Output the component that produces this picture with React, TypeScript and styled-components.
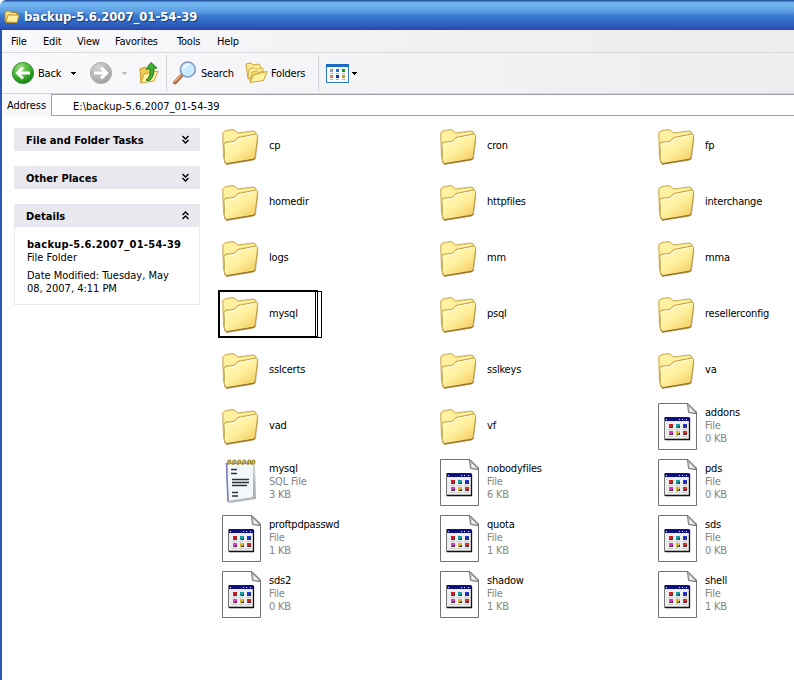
import React from "react";
import styled, { createGlobalStyle } from "styled-components";

const GlobalStyle = createGlobalStyle`
  *, *::after { box-sizing: border-box; }
  body { margin: 0; background: #fff; }
  svg { display: block; flex: none; }
`;

const Window = styled.div`
  width: 794px;
  height: 680px;
  overflow: hidden;
  display: flex;
  flex-direction: column;
  background: #fff;
  color: #000;
  font: 11px/13px "DejaVu Sans Condensed", "DejaVu Sans", sans-serif;
  font-stretch: condensed;
  letter-spacing: -0.2px;
  white-space: nowrap;
`;

const TitleBar = styled.header`
  height: 30px;
  flex: none;
  display: flex;
  align-items: center;
  padding: 4px 0 0 4px;
  gap: 4px;
  border-radius: 6px 0 0 0;
  background: linear-gradient(#2550a0 0, #2c58a8 1px, #6fb0ee 2px, #73b5f0 5px, #5a9ae2 12px, #3f80d4 15px, #3474cc 18px, #2f62c0 24px, #2a4db0 29px, #2743a4 30px);
`;

const WindowTitle = styled.h1`
  margin: 0;
  color: #fff;
  font-size: 13px;
  line-height: 18px;
  font-weight: bold;
  letter-spacing: -0.05px;
  text-shadow: 1px 1px 1px #163878;
`;

const Frame = styled.div`
  flex: 1;
  min-height: 0;
  display: flex;
  flex-direction: column;
  border-left: 2px solid #2d55b4;
`;

const MenuBar = styled.nav`
  height: 23px;
  flex: none;
  display: flex;
  align-items: center;
  padding-left: 9px;
  background: linear-gradient(90deg, #fafafc, #f1f1f3 55%, #ededf0);
  border-bottom: 1px solid #d8d8dc;
`;

const MenuItem = styled.span<{ $w: number }>`
  width: ${(p) => p.$w}px;
`;

const ToolBar = styled.div`
  height: 41px;
  flex: none;
  display: flex;
  align-items: center;
  padding-left: 9px;
  background: linear-gradient(90deg, #fafafc, #f3f3f5 50%, #ededf0);
  border-bottom: 1px solid #d4d4d8;
`;

const ToolLabel = styled.span<{ $w: number }>`
  width: ${(p) => p.$w}px;
  padding-left: 3px;
`;

const Gap = styled.span<{ $w: number }>`
  width: ${(p) => p.$w}px;
  flex: none;
`;

const Separator = styled.span`
  width: 1px;
  height: 36px;
  background: #cfcfd4;
`;

const AddressBar = styled.div`
  height: 22px;
  flex: none;
  display: flex;
  align-items: center;
  background: #f8f8fa;
`;

const AddressCaption = styled.span`
  width: 49px;
  padding-left: 5px;
  letter-spacing: -0.05px;
`;

const AddressField = styled.div`
  flex: 1;
  height: 22px;
  padding: 5px 0 0 21px;
  background: #fff;
  border: solid #a0a0a6;
  border-width: 1px 0 1px 1px;
  letter-spacing: 0.02px;
`;

const Body = styled.div`
  flex: 1;
  display: flex;
  min-height: 0;
`;

const TaskPane = styled.aside`
  width: 198px;
  margin-right: 18px;
  padding: 12px 0 0 12px;
  flex: none;
`;

const Panel = styled.section`
  margin-bottom: 15px;
`;

const PanelHeader = styled.h2`
  margin: 0;
  height: 23px;
  padding: 2px 10px 0 12px;
  display: flex;
  align-items: center;
  justify-content: space-between;
  background: #e8e8ee;
  font-size: 11px;
  letter-spacing: 0.03px;
`;

const PanelBody = styled.div`
  height: 78px;
  padding: 11px 12px 0;
  border: 1px solid #e9e9ee;
  border-top: 0;
`;

const DetailName = styled.div`
  font-weight: bold;
  letter-spacing: 0.27px;
`;

const DetailText = styled.p`
  margin: 0 0 5px;
  letter-spacing: -0.02px;
`;

const FileGrid = styled.main`
  display: grid;
  grid-template-columns: repeat(3, 218px);
  grid-auto-rows: 56px;
  align-content: start;
  padding-top: 2px;
`;

const Tile = styled.div`
  position: relative;
  display: flex;
  align-items: center;
  padding-left: 4px;
`;

const IconCell = styled.div<{ $drop: number }>`
  width: 47px;
  flex: none;
  padding-top: ${(p) => p.$drop}px;
`;

const TileText = styled.div<{ $file: boolean }>`
  padding-bottom: ${(p) => (p.$file ? 1 : 2)}px;
`;

const Meta = styled.div`
  color: #858585;
`;

const Highlight = styled.div`
  position: absolute;
  left: 0;
  top: 4px;
  width: 100px;
  height: 48px;
  border: 2px solid #000;
  border-right-width: 1px;
  &::after {
    content: "";
    position: absolute;
    left: 95px;
    top: -1px;
    width: 7px;
    height: 47px;
    border: 1px solid #000;
  }
`;

const FolderIcon = () => (
  <svg width="38" height="40" viewBox="0 0 38 40">
    <defs>
      <linearGradient id="front" x1="0" y1="0" x2=".8" y2="1">
        <stop offset="0" stopColor="#fffbc0" />
        <stop offset=".55" stopColor="#fff09e" />
        <stop offset="1" stopColor="#f2cb5c" />
      </linearGradient>
    </defs>
    <path d="M4 38 L31 33.8 L34 32 L36.5 12 L35 9 L3 35Z" fill="#8f8770" opacity=".45" />
    <path d="M.7 6 L2.5 4 L10 2.5 L13 3.3 L15.5 6 L31 4 L33.5 5 L34.5 8 L32 32 L3 36 L1.5 30Z" fill="#fbe38a" stroke="#c8aa52" />
    <path d="M2 7 L3.5 5 L10 3.7 L12.5 4.6 L15 7.4 L31 5.3 L32 6.5 L15 9.5 L11.5 13.2 L2.5 14Z" fill="#fff1a0" />
    <path d="M2 17 L3.3 15.5 L12 14.5 L16 10.5 L34.5 7 L35.8 8.2 L33 31 L31.5 32.5 L5 37 L3.3 36Z" fill="url(#front)" stroke="#c09a3c" />
    <path d="M3.8 34 L3.1 17.5 L4.2 16.5 L12.6 15.5 L16.5 11.6 L34.3 8.2" fill="none" stroke="#fffde4" />
    <path d="M4 36.8 L31.5 32.5 L33 31" fill="none" stroke="#967425" strokeWidth="1.3" />
  </svg>
);

const DocIcon = () => (
  <svg width="40" height="48" viewBox="0 0 40 48">
    <path d="M.5.5 H30 L38.5 9 V46.5 H.5Z" fill="#fff" stroke="#707070" />
    <path d="M29.5 1 L30.5 9.5 L38 10.5 V9Z" fill="#c8c8c8" stroke="#777" />
    <path d="M31.5 4.5 L32 8.5 L36 9Z" fill="#f8f8f8" />
    <path d="M6.5 14.5 H31.5 V36.5 H6.5Z" fill="#ededed" stroke="#777" />
    <path d="M7 36.5 H31.5 V15" fill="none" stroke="#111" strokeWidth="1.3" />
    <path d="M7 14 H31 V18 H7Z" fill="#10107c" />
    <path d="M21 16h1v1h-1zM24 16h1v1h-1zM28 16h1v1h-1zM8 16h1v1H8z" fill="#e9e9f8" />
    {["#d91a20", "#159ca4", "#2033d0", "#df33c5", "#d4b52c", "#dc2520"].map((c, i) => {
      const x = 11 + (i % 3) * 7;
      const y = 21 + Math.floor(i / 3) * 7;
      return (
        <g key={i}>
          <path d={`M${x} ${y}h4v4h-4z`} fill={c} />
          <path d={`M${x + 1} ${y + 3.5}h2.5v-1.5`} stroke="#333" fill="none" />
          <path d={`M${x - 1} ${y + 5.5}h5`} stroke="#ccc" />
        </g>
      );
    })}
  </svg>
);

const NotepadIcon = () => (
  <svg width="38" height="48" viewBox="0 0 38 48">
    <path d="M6 43 L31 39 L33 8 L34 40 L8 44Z" fill="#b5b5b5" />
    <path d="M4.5 4 L32 4 L31.5 38.5 L6 42.5Z" fill="#f4f8fb" stroke="#a4aab2" />
    <path d="M4.5 4 L6 42.5" stroke="#7b7dc4" strokeWidth="1.6" />
    <path d="M5 4.5 H32" stroke="#9a9684" strokeWidth="1.4" />
    {[6, 11, 16, 21, 26, 30].map((x) => (
      <path key={x} d={`M${x} 6 V3 q0-2 2-1.5 q1.2 .8 .4 3`} fill="none" stroke="#a58e2c" strokeWidth="1.6" />
    ))}
    <path d="M9 10.5h6M9 14.5h6M10 20.5h17M10 23.5h17M10 26.5h15M10 33.5h6M10 37h6" stroke="#2a313b" strokeWidth="1.5" />
  </svg>
);

const RoundArrow = ({ forward = false }: { forward?: boolean }) => {
  const id = forward ? "fwd" : "bck";
  return (
    <svg width="24" height="24" viewBox="0 0 24 24">
      <defs>
        <radialGradient id={id} cx=".38" cy=".25" r=".75">
          <stop offset="0" stopColor={forward ? "#d2d2d2" : "#9bdd7d"} />
          <stop offset=".6" stopColor={forward ? "#b8b8b8" : "#43ae2f"} />
          <stop offset="1" stopColor={forward ? "#a0a0a0" : "#168016"} />
        </radialGradient>
      </defs>
      <circle cx="12" cy="12" r="10.6" fill={`url(#${id})`} stroke={forward ? "#b0b0b0" : "#379735"} />
      <path
        d={forward ? "M5 12 H17 M12 6.5 L17.5 12 L12 17.5" : "M19 12 H7 M12 6.5 L6.5 12 L12 17.5"}
        fill="none"
        stroke="#fff"
        strokeWidth="3"
      />
    </svg>
  );
};

const Caret = ({ color = "#000" }: { color?: string }) => (
  <svg width="5" height="3" viewBox="0 0 5 3" shapeRendering="crispEdges">
    <path d="M0 0h5v1H4v1H3v1H2V2H1V1H0z" fill={color} />
  </svg>
);

const UpIcon = () => (
  <svg width="20" height="24" viewBox="0 0 20 24">
    <path d="M1 8 L6 6 L8 8 L15 7 L15 18 L2 22Z" fill="#efca55" stroke="#c49a2b" />
    <path d="M2 22 L5 13 L19 10 L15 20Z" fill="#fff1a0" stroke="#cda637" />
    <path d="M7 19 Q12 16 11 8 L7 8 L12 1.5 L18 7 L14.5 7.5 Q16 15 10 20Z" fill="#43ad34" stroke="#247c20" />
  </svg>
);

const SearchIcon = () => (
  <svg width="26" height="26" viewBox="0 0 26 26">
    <path d="M10 15 L3 22.5" stroke="#a96c45" strokeWidth="4" strokeLinecap="round" />
    <path d="M9 15 L2.7 21.7" stroke="#e5b087" strokeWidth="1.5" strokeLinecap="round" />
    <circle cx="15.8" cy="9.5" r="7.5" fill="#c9ebfb" stroke="#8099c6" strokeWidth="1.6" />
    <path d="M10.5 9 Q12 3 18 4.5 Q14 6 10.5 9Z" fill="#fff" />
  </svg>
);

const FoldersIcon = () => (
  <svg width="23" height="22" viewBox="0 0 23 22">
    <path d="M1 2 L6 1 L8 3 L14 2 L16 5 L12 15 L3 17Z" fill="#ffec93" stroke="#c9a23c" />
    <path d="M3 16 L4 7 L9 5.5 L11 7.5 L18 6 L17 15Z" fill="#ffef9e" stroke="#d5b04a" />
    <path d="M5 19.5 L7 10 L11 9 L13 10.5 L19 9 L18 16Z" fill="#f3d36c" stroke="#d5b04a" />
    <path d="M5 20.5 L8.5 13 L22 9.5 L18.5 18.5Z" fill="#fff2a1" stroke="#c9a23c" />
  </svg>
);

const ViewsIcon = () => (
  <svg width="23" height="19" viewBox="0 0 23 19">
    <rect x=".5" y=".5" width="22" height="18" fill="#f7fbff" stroke="#347acb" />
    <path d="M0 0h23v3H0z" fill="#176bc3" />
    {["#9298b4", "#226fc4", "#159629", "#dd8054", "#1636a0", "#c49b21"].map((c, i) => (
      <g key={i}>
        <rect x={4 + (i % 3) * 6} y={5 + Math.floor(i / 3) * 6} width="3" height="3" fill={c} />
        <rect x={4 + (i % 3) * 6} y={9 + Math.floor(i / 3) * 6} width="3" height="1" fill="#b1bac7" />
      </g>
    ))}
  </svg>
);

const TitleFolder = () => (
  <svg width="16" height="14" viewBox="0 0 16 14">
    <path d="M1 2.5 L2 1 H6 L7.5 2.5 H13 V5 L11 12.5 H2 L1 11Z" fill="#f9df79" stroke="#a4812c" />
    <path d="M2 12 L4 5 H15 L13 12.5Z" fill="#fff0a0" stroke="#ba9134" />
  </svg>
);

const Chevrons = ({ up = false }: { up?: boolean }) => (
  <svg width="9" height="11" viewBox="0 0 9 11">
    <path
      d={up ? "M1.5 4 L4.5 1 L7.5 4 M1.5 8 L4.5 5 L7.5 8" : "M1.5 1 L4.5 4 L7.5 1 M1.5 5 L4.5 8 L7.5 5"}
      fill="none"
      stroke="#000"
      strokeWidth="1.4"
    />
  </svg>
);

type Entry = { name: string; kind?: "doc" | "note"; size?: string; marked?: boolean };

const entries: Entry[] = [
  { name: "cp" }, { name: "cron" }, { name: "fp" },
  { name: "homedir" }, { name: "httpfiles" }, { name: "interchange" },
  { name: "logs" }, { name: "mm" }, { name: "mma" },
  { name: "mysql", marked: true }, { name: "psql" }, { name: "resellerconfig" },
  { name: "sslcerts" }, { name: "sslkeys" }, { name: "va" },
  { name: "vad" }, { name: "vf" }, { name: "addons", kind: "doc", size: "0 KB" },
  { name: "mysql", kind: "note", size: "3 KB" },
  { name: "nobodyfiles", kind: "doc", size: "6 KB" },
  { name: "pds", kind: "doc", size: "0 KB" },
  { name: "proftpdpasswd", kind: "doc", size: "1 KB" },
  { name: "quota", kind: "doc", size: "1 KB" },
  { name: "sds", kind: "doc", size: "0 KB" },
  { name: "sds2", kind: "doc", size: "0 KB" },
  { name: "shadow", kind: "doc", size: "1 KB" },
  { name: "shell", kind: "doc", size: "1 KB" },
];

const menus: [string, number][] = [["File", 32], ["Edit", 34], ["View", 38], ["Favorites", 62], ["Tools", 40], ["Help", 40]];

export default function App() {
  return (
    <Window>
      <GlobalStyle />
      <TitleBar>
        <TitleFolder />
        <WindowTitle>backup-5.6.2007_01-54-39</WindowTitle>
      </TitleBar>
      <Frame>
        <MenuBar>
          {menus.map(([label, w]) => <MenuItem key={label} $w={w}>{label}</MenuItem>)}
        </MenuBar>
        <ToolBar>
          <RoundArrow />
          <ToolLabel $w={36}>Back</ToolLabel>
          <Caret />
          <Gap $w={13} />
          <RoundArrow forward />
          <Gap $w={9} />
          <Caret color="#bdbdc1" />
          <Gap $w={12} />
          <UpIcon />
          <Gap $w={7} />
          <Separator />
          <Gap $w={5} />
          <SearchIcon />
          <ToolLabel $w={47}>Search</ToolLabel>
          <FoldersIcon />
          <ToolLabel $w={50}>Folders</ToolLabel>
          <Separator />
          <Gap $w={7} />
          <ViewsIcon />
          <Gap $w={3} />
          <Caret />
        </ToolBar>
        <AddressBar>
          <AddressCaption>Address</AddressCaption>
          <AddressField>E:\backup-5.6.2007_01-54-39</AddressField>
        </AddressBar>
        <Body>
          <TaskPane>
            <Panel><PanelHeader>File and Folder Tasks<Chevrons /></PanelHeader></Panel>
            <Panel><PanelHeader>Other Places<Chevrons /></PanelHeader></Panel>
            <Panel>
              <PanelHeader>Details<Chevrons up /></PanelHeader>
              <PanelBody>
                <DetailName>backup-5.6.2007_01-54-39</DetailName>
                <DetailText>File Folder</DetailText>
                <DetailText>Date Modified: Tuesday, May<br />08, 2007, 4:11 PM</DetailText>
              </PanelBody>
            </Panel>
          </TaskPane>
          <FileGrid>
            {entries.map((e, i) => (
              <Tile key={i}>
                {e.marked && <Highlight />}
                <IconCell $drop={e.kind ? 1 : 2}>
                  {e.kind === "doc" ? <DocIcon /> : e.kind === "note" ? <NotepadIcon /> : <FolderIcon />}
                </IconCell>
                <TileText $file={!!e.kind}>
                  {e.name}
                  {e.kind && <Meta>{e.kind === "note" ? "SQL File" : "File"}</Meta>}
                  {e.kind && <Meta>{e.size}</Meta>}
                </TileText>
              </Tile>
            ))}
          </FileGrid>
        </Body>
      </Frame>
    </Window>
  );
}
